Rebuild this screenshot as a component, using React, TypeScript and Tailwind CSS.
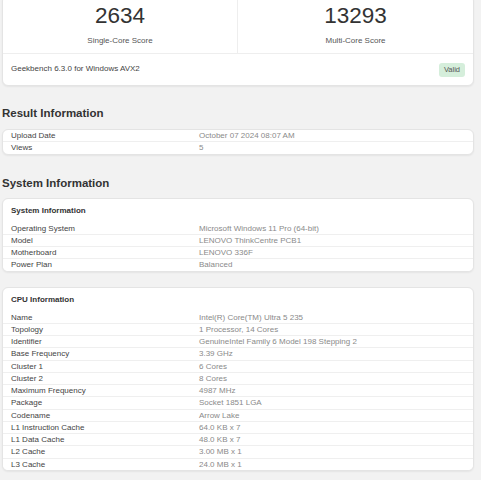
import React from "react";

type Row = [string, string];

const resultRows: Row[] = [
  ["Upload Date", "October 07 2024 08:07 AM"],
  ["Views", "5"],
];

const systemRows: Row[] = [
  ["Operating System", "Microsoft Windows 11 Pro (64-bit)"],
  ["Model", "LENOVO ThinkCentre PCB1"],
  ["Motherboard", "LENOVO 336F"],
  ["Power Plan", "Balanced"],
];

const cpuRows: Row[] = [
  ["Name", "Intel(R) Core(TM) Ultra 5 235"],
  ["Topology", "1 Processor, 14 Cores"],
  ["Identifier", "GenuineIntel Family 6 Model 198 Stepping 2"],
  ["Base Frequency", "3.39 GHz"],
  ["Cluster 1", "6 Cores"],
  ["Cluster 2", "8 Cores"],
  ["Maximum Frequency", "4987 MHz"],
  ["Package", "Socket 1851 LGA"],
  ["Codename", "Arrow Lake"],
  ["L1 Instruction Cache", "64.0 KB x 7"],
  ["L1 Data Cache", "48.0 KB x 7"],
  ["L2 Cache", "3.00 MB x 1"],
  ["L3 Cache", "24.0 MB x 1"],
];

function Rows({ rows }: { rows: Row[] }) {
  return (
    <div className="flex flex-col">
      {rows.map(([label, value], i) => (
        <div
          key={label}
          className={
            "grid grid-cols-[188px_1fr] px-[8px] text-[8px] leading-[11.25px] " +
            (i > 0 ? "border-t border-[#efefef]" : "")
          }
        >
          <span className="text-[#444]">{label}</span>
          <span className="text-[#8a8a8a]">{value}</span>
        </div>
      ))}
    </div>
  );
}

function Card({ children, className = "" }: { children: React.ReactNode; className?: string }) {
  return (
    <div
      className={
        "ml-[2px] w-[472px] bg-white border border-[#e4e4e4] rounded-[6px] shadow-[0_1px_2px_rgba(0,0,0,0.06)] overflow-hidden " +
        className
      }
    >
      {children}
    </div>
  );
}

function TableCard({ title, rows, className = "" }: { title: string; rows: Row[]; className?: string }) {
  return (
    <Card className={"bg-[#efefef] " + className}>
      <div className="h-[24px] flex items-center px-[8px] text-[8px] font-bold text-[#333]">{title}</div>
      <div className="bg-white">
        <Rows rows={rows} />
      </div>
    </Card>
  );
}

function Heading({ children, className = "" }: { children: React.ReactNode; className?: string }) {
  return (
    <h2 className={"ml-[2px] text-[11.5px] leading-[14px] font-bold text-[#333] " + className}>{children}</h2>
  );
}

export default function App() {
  return (
    <div className="w-[481px] h-[480px] overflow-hidden bg-[#f2f2f2] font-['Liberation_Sans',Arial,sans-serif]">
      {/* Score card */}
      <Card className="-mt-[5px]">
        <div className="grid grid-cols-2 border-b border-[#eeeeee]">
          <div className="flex flex-col items-center pt-[7px] pb-[7px] border-r border-[#eeeeee]">
            <div className="text-[22.5px] leading-[26px] text-[#333]">2634</div>
            <div className="mt-[7px] text-[8px] leading-[10px] text-[#555]">Single-Core Score</div>
          </div>
          <div className="flex flex-col items-center pt-[7px] pb-[7px]">
            <div className="text-[22.5px] leading-[26px] text-[#333]">13293</div>
            <div className="mt-[7px] text-[8px] leading-[10px] text-[#555]">Multi-Core Score</div>
          </div>
        </div>
        <div className="h-[31px] flex items-center justify-between pl-[8px] pr-[8px]">
          <span className="text-[8px] text-[#444] -mt-[2px]">Geekbench 6.3.0 for Windows AVX2</span>
          <span className="bg-[#d5eedb] text-[#555] text-[7.5px] leading-[14px] px-[5px] rounded-[3px]">Valid</span>
        </div>
      </Card>

      <Heading className="mt-[20px]">Result Information</Heading>
      <Card className="mt-[9px]">
        <Rows rows={resultRows} />
      </Card>

      <Heading className="mt-[21px]">System Information</Heading>
      <TableCard title="System Information" rows={systemRows} className="mt-[8px]" />
      <TableCard title="CPU Information" rows={cpuRows} className="mt-[15px]" />
    </div>
  );
}
